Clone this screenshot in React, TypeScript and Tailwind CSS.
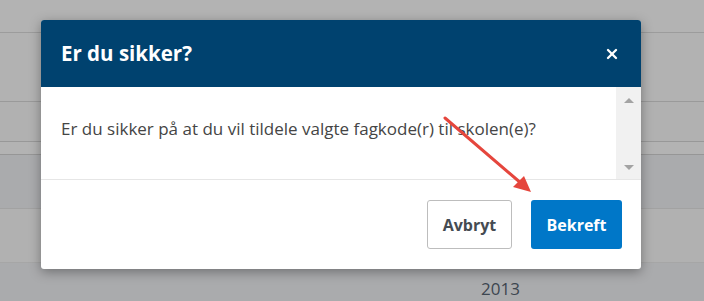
import React from 'react';
import { X } from 'lucide-react';

const rows = [
  { h: 'h-[33px]', bg: 'bg-[#b3b3b3]', line: 'border-[#9c9c9c]' },
  { h: 'h-[69px]', bg: 'bg-[#b2b2b2]', line: 'border-[#9a9a9a]' },
  { h: 'h-[40px]', bg: 'bg-[#b1b1b1]', line: 'border-[#989898]' },
  { h: 'h-[13px]', bg: 'bg-[#b3b3b3]', line: 'border-[#969696]' },
  { h: 'h-[54px]', bg: 'bg-[#aaabad]', line: 'border-[#a2a2a2]' },
  { h: 'h-[54px]', bg: 'bg-[#b1b1b1]', line: 'border-[#a6a6a6]' },
];

export default function App() {
  return (
    <div className="relative w-[704px] h-[301px] overflow-hidden bg-[#aaabad] font-['Open_Sans',sans-serif]">
      {/* table behind the overlay */}
      <div className="flex flex-col">
        {rows.map((row, idx) => (
          <div key={idx} className={`${row.h} ${row.bg} border-b ${row.line}`} />
        ))}
        <div className="h-[38px] flex justify-end pr-[184px] pt-[15px]">
          <span className="text-[17px] leading-[22px] text-[#3d4650]">2013</span>
        </div>
      </div>

      {/* dialog */}
      <div className="absolute left-[41px] top-[20px] w-[600px] bg-white rounded-[3px] shadow-[0_3px_12px_rgba(0,0,0,0.35)] overflow-hidden">
        <div className="h-[67px] bg-[#00426f] flex items-center justify-between pl-[20px] pr-[21px]">
          <h2 className="text-[20.5px] font-bold text-white">Er du sikker?</h2>
          <X size={16} strokeWidth={3.5} className="text-white" />
        </div>

        <div className="h-[93px] flex border-b border-[#e6e6e6]">
          <div className="flex-1 pl-[20px] pt-[30px]">
            <p className="text-[17px] leading-[24px] text-[#454545]">
              Er du sikker på at du vil tildele valgte fagkode(r) til skolen(e)?
            </p>
          </div>
          <div className="w-[25px] bg-[#f1f1f1] flex flex-col items-center justify-between pt-[11px] pb-[9px]">
            <div className="w-0 h-0 border-l-[5px] border-r-[5px] border-b-[5px] border-l-transparent border-r-transparent border-b-[#a3a3a3]" />
            <div className="w-0 h-0 border-l-[5px] border-r-[5px] border-t-[5px] border-l-transparent border-r-transparent border-t-[#a3a3a3]" />
          </div>
        </div>

        <div className="h-[89px] flex items-center justify-end gap-[19px] pr-[19px]">
          <button className="w-[85px] h-[49px] border border-[#bdbdbd] rounded-[3px] bg-white text-[16px] font-bold text-[#454b52]">
            Avbryt
          </button>
          <button className="w-[91px] h-[49px] rounded-[3px] bg-[#0077c8] text-[16px] font-bold text-white">
            Bekreft
          </button>
        </div>
      </div>

      {/* annotation arrow */}
      <svg className="absolute left-0 top-0" width="704" height="301" viewBox="0 0 704 301">
        <line x1="445" y1="118" x2="522" y2="184" stroke="#e5463d" strokeWidth="3" strokeLinecap="round" />
        <polygon points="531,192 513,187 524,176" fill="#e5463d" />
      </svg>
    </div>
  );
}
